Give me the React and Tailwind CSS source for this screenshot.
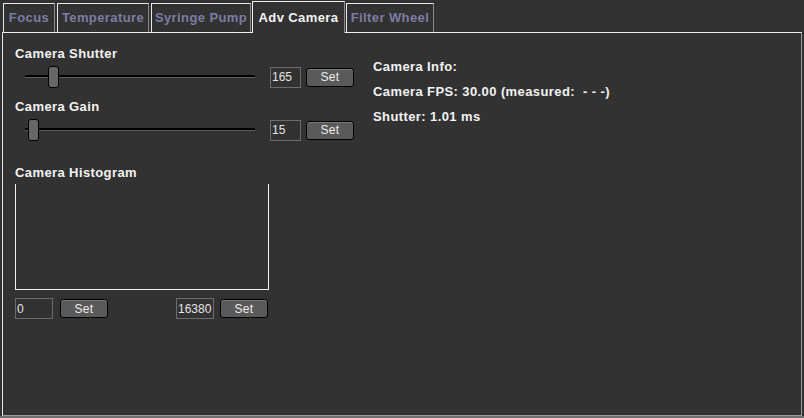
import React from "react";

const font = { fontFamily: '"Liberation Sans", Arial, sans-serif' };

function Tab({ label, active, className }) {
  if (active) {
    return (
      <div className={"relative z-10 -mb-px flex h-[32px] items-center justify-center border-l border-t border-r border-l-[#f0f0f0] border-t-[#f0f0f0] border-r-[#8a8a8a] bg-[#323232] text-[13px] font-bold tracking-[0.4px] text-[#f4f4f4] " + className}>
        {label}
      </div>
    );
  }
  return (
    <div className={"flex h-[29px] items-center justify-center border-l border-t border-r border-l-[#e8e8e8] border-t-[#e8e8e8] border-r-[#8a8a8a] text-[13px] font-bold tracking-[0.4px] text-[#7d7ca2] " + className}>
      {label}
    </div>
  );
}

function Slider({ pos }) {
  return (
    <div className="relative h-[22px] w-[255px]">
      <div className="absolute left-[10px] top-[9px] h-[3px] w-[230px] border-b border-[#5a5a5a] bg-black" />
      <div className="absolute top-0 h-[22px] w-[11px] rounded-[3px] border border-black bg-[#676767]" style={{ left: pos }} />
    </div>
  );
}

function ValueBox({ value, w = "w-[31px]" }) {
  return (
    <div className={"flex h-[21px] items-center border border-[#6c6c6c] pl-[1px] text-[12px] text-[#e4e4e4] " + w}>
      {value}
    </div>
  );
}

function SetButton({ className = "" }) {
  return (
    <div className={"flex h-[19px] w-[48px] items-center justify-center rounded-[3px] border border-black bg-[#5a5a5a] text-[12px] tracking-[0.3px] text-[#ececec] shadow-[inset_0_1px_0_#7a7a7a] " + className}>
      Set
    </div>
  );
}

export default function App() {
  return (
    <div className="h-[418px] w-[804px] overflow-hidden bg-[#323232]" style={font}>
      <div className="flex h-[32px] items-end">
        <Tab label="Focus" className="ml-[3px] w-[52px]" />
        <Tab label="Temperature" className="ml-[2px] w-[92px]" />
        <Tab label="Syringe Pump" className="ml-[2px] w-[100px]" />
        <Tab label="Adv Camera" active className="ml-[1px] w-[93px]" />
        <Tab label="Filter Wheel" className="ml-px w-[88px]" />
      </div>
      <div className="ml-[2px] flex h-[384px] w-[800px] border border-l-[#e8e8e8] border-t-[#f0f0f0] border-r-[#9a9a9a] border-b-[#9a9a9a] pl-[12px] pt-[13px]">
        <div className="w-[358px] text-[#f2f2f2]">
          <div className="h-4 text-[13px] font-bold leading-4 tracking-[0.4px]">Camera Shutter</div>
          <div className="mt-[4px] flex items-center">
            <Slider pos={33} />
            <ValueBox value="165" />
            <SetButton className="ml-[5px]" />
          </div>
          <div className="mt-[11px] h-4 text-[13px] font-bold leading-4 tracking-[0.4px]">Camera Gain</div>
          <div className="mt-[4px] flex items-center">
            <Slider pos={13} />
            <ValueBox value="15" />
            <SetButton className="ml-[5px]" />
          </div>
          <div className="mt-[24px] h-4 text-[13px] font-bold leading-4 tracking-[0.4px]">Camera Histogram</div>
          <div className="mt-[3px] h-[106px] w-[254px] border-x border-b border-[#f0f0f0]" />
          <div className="mt-[8px] flex items-center">
            <ValueBox value="0" w="w-[38px]" />
            <SetButton className="ml-[7px]" />
            <ValueBox value="16380" w="ml-[68px] w-[38px]" />
            <SetButton className="ml-[6px]" />
          </div>
        </div>
        <div className="mt-[13px] flex flex-col gap-[9px] text-[13px] font-bold leading-4 tracking-[0.4px] text-[#f2f2f2]">
          <div>Camera Info:</div>
          <div>Camera FPS: 30.00 (measured: &nbsp;- - -)</div>
          <div>Shutter: 1.01 ms</div>
        </div>
      </div>
      <div className="h-[2px] bg-[#6e6e6e]" />
    </div>
  );
}
